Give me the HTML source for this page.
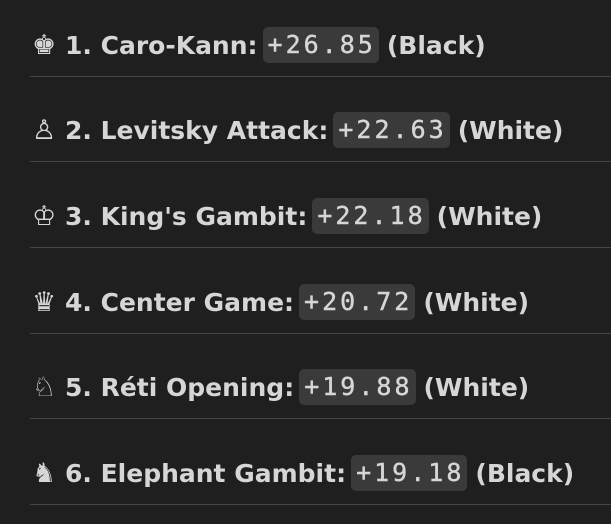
<!DOCTYPE html>
<html><head><style>
html,body{margin:0;padding:0;background:#1f1f1f;width:611px;height:524px;overflow:hidden}
.row{position:absolute;left:30px;right:0;height:86px;border-bottom:1px solid #454545}
.t{position:absolute;left:2px;top:0;height:100%;display:flex;align-items:center;white-space:nowrap;font-family:"DejaVu Sans",sans-serif;font-weight:bold;font-size:25px;color:#d6d6d6}
.p{font-family:"DejaVu Sans",sans-serif;font-weight:normal;font-size:27px;width:33px;display:inline-block}
code{font-family:"DejaVu Sans Mono","Liberation Mono",monospace;font-weight:normal;font-size:25px;letter-spacing:3px;background:#3a3a3a;border-radius:5px;padding:3px 3px 3px 5px;margin:0 8px 0 5px;line-height:30px;-webkit-text-stroke:0.4px #d6d6d6}
</style></head><body>
<div class="row" style="top:-10px"><div class="t" style="top:12px"><span class="p">♚</span>1. Caro-Kann:<code>+26.85</code>(Black)</div></div>
<div class="row" style="top:75px"><div class="t" style="top:12px"><span class="p">♙</span>2. Levitsky Attack:<code>+22.63</code>(White)</div></div>
<div class="row" style="top:161px"><div class="t" style="top:12px"><span class="p">♔</span>3. King's Gambit:<code>+22.18</code>(White)</div></div>
<div class="row" style="top:247px"><div class="t" style="top:12px"><span class="p">♛</span>4. Center Game:<code>+20.72</code>(White)</div></div>
<div class="row" style="top:332px"><div class="t" style="top:12px"><span class="p">♘</span>5. Réti Opening:<code>+19.88</code>(White)</div></div>
<div class="row" style="top:418px"><div class="t" style="top:12px"><span class="p">♞</span>6. Elephant Gambit:<code>+19.18</code>(Black)</div></div>
</body></html>
